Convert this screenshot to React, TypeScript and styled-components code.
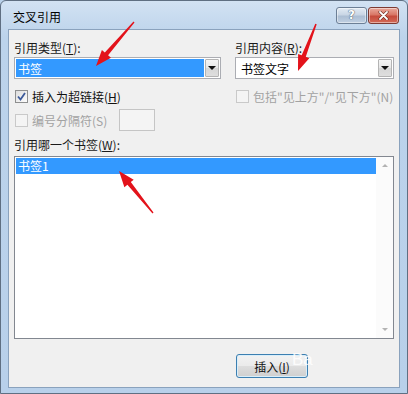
import React from 'react';
import styled, { createGlobalStyle } from 'styled-components';

const Global = createGlobalStyle`
  html, body { margin: 0; padding: 0; background: #b9d1ea; }
  body {
    font-family: "Noto Sans CJK SC", "Microsoft YaHei", sans-serif;
    font-size: 12px;
    color: #1a1a1a;
  }
  * { box-sizing: border-box; }
`;

const Window = styled.div`
  position: relative;
  width: 408px;
  height: 394px;
  border: 1px solid #5f6f82;
  border-radius: 6px 6px 0 0;
  background: linear-gradient(#d2e2f3, #bcd3eb 36px, #b8d0ea);
  display: flex;
  flex-direction: column;
  padding: 0 7px 5px 7px;
  overflow: hidden;
`;

const TitleBar = styled.div`
  height: 28px;
  display: flex;
  align-items: center;
  padding: 3px 1px 0 5px;
`;

const Title = styled.div`
  font-size: 12px;
  color: #000;
  flex: 1;
`;

const CaptionButton = styled.div<{ $close?: boolean }>`
  width: 31px;
  height: 17px;
  margin-top: -3px;
  border: 1px solid ${(p) => (p.$close ? '#7d3a32' : '#6c7f96')};
  border-radius: 3px;
  background: ${(p) =>
    p.$close
      ? 'linear-gradient(#e9a99c 0%, #d97766 45%, #c64b3c 55%, #d36a57 100%)'
      : 'linear-gradient(#e3ebf4 0%, #c9d6e5 45%, #adbfd4 55%, #c0d0e2 100%)'};
  box-shadow: inset 0 0 0 1px rgba(255, 255, 255, 0.45);
  display: flex;
  align-items: center;
  justify-content: center;
  & + & { margin-left: 1px; }
`;

const HelpGlyph = styled.span`
  font-family: "DejaVu Sans", sans-serif;
  font-weight: bold;
  font-size: 12px;
  color: #fff;
  text-shadow: 0 0 1px #3e4f63, 0 0 1px #3e4f63;
  line-height: 1;
`;

const Client = styled.div`
  flex: 1;
  background: #f0f0f0;
  border: 1px solid #8aa2bd;
  padding: 10px 5px 0 5px;
  display: flex;
  flex-direction: column;
`;

const TopGrid = styled.div`
  display: grid;
  grid-template-columns: 207px 159px;
  column-gap: 14px;
  align-items: center;
`;

const Label = styled.div<{ $gap?: number }>`
  height: 16px;
  line-height: 16px;
  margin-bottom: 1px;
  margin-top: ${(p) => p.$gap ?? 0}px;
  white-space: nowrap;
`;

const U = styled.span`
  text-decoration: underline;
  text-underline-offset: 1px;
`;

const Combo = styled.div`
  height: 22px;
  border: 1px solid #abadb3;
  background: #fff;
  padding: 1px;
  display: flex;
`;

const ComboValue = styled.div<{ $selected?: boolean }>`
  flex: 1;
  display: flex;
  align-items: center;
  padding-left: ${(p) => (p.$selected ? 2 : 4)}px;
  margin-right: 1px;
  background: ${(p) => (p.$selected ? '#3399ff' : 'transparent')};
  color: ${(p) => (p.$selected ? '#fff' : '#000')};
`;

const DropButton = styled.div`
  width: 14px;
  border: 1px solid #b4b4b4;
  border-radius: 1px;
  background: linear-gradient(#f5f5f5, #e7e7e7 50%, #d6d6d6 51%, #dedede);
  display: flex;
  align-items: center;
  justify-content: center;
`;

const Triangle = styled.span`
  width: 0;
  height: 0;
  border-left: 4px solid transparent;
  border-right: 4px solid transparent;
  border-top: 4px solid #111;
`;

const CheckRow = styled.div<{ $gap: number; $disabled?: boolean }>`
  margin-top: ${(p) => p.$gap}px;
  height: 16px;
  display: flex;
  align-items: center;
  gap: 4px;
  padding-left: 1px;
  color: ${(p) => (p.$disabled ? '#a2a2a2' : '#111')};
  white-space: nowrap;
`;

const Box = styled.span<{ $disabled?: boolean }>`
  width: 13px;
  height: 13px;
  flex: none;
  border: 1px solid ${(p) => (p.$disabled ? '#c9c9c9' : '#8e8f8f')};
  background: ${(p) =>
    p.$disabled ? '#f4f4f4' : 'linear-gradient(135deg, #dcdcdc, #fdfdfd)'};
  display: flex;
  align-items: center;
  justify-content: center;
`;

const SeparatorRow = styled.div`
  margin-top: 5px;
  height: 22px;
  display: flex;
  align-items: center;
  gap: 4px;
  padding-left: 1px;
  color: #a2a2a2;
`;

const SmallInput = styled.div`
  width: 36px;
  height: 22px;
  margin-left: 8px;
  border: 1px solid #c5c5c5;
  background: #f4f4f4;
`;

const ListBox = styled.div`
  margin-top: 2px;
  height: 183px;
  border: 1px solid #828790;
  background: #fff;
  display: flex;
`;

const ListItems = styled.div`
  flex: 1;
  padding: 1px 0 0 1px;
`;

const ListItem = styled.div<{ $selected?: boolean }>`
  height: 16px;
  line-height: 16px;
  padding-left: 2px;
  background: ${(p) => (p.$selected ? '#3399ff' : 'transparent')};
  color: ${(p) => (p.$selected ? '#fff' : '#000')};
`;

const ScrollBar = styled.div`
  width: 17px;
  background: #fbfbfb;
  display: flex;
  flex-direction: column;
  justify-content: space-between;
`;

const ScrollArrow = styled.div<{ $down?: boolean }>`
  height: 17px;
  display: flex;
  align-items: center;
  justify-content: center;
  &::after {
    content: '';
    border-left: 3px solid transparent;
    border-right: 3px solid transparent;
    ${(p) =>
      p.$down ? 'border-top: 3px solid #b3b3b3;' : 'border-bottom: 3px solid #b3b3b3;'}
  }
`;

const Footer = styled.div`
  margin-top: 15px;
  display: flex;
  padding-left: 222px;
`;

const PushButton = styled.div`
  width: 72px;
  height: 24px;
  border: 1px solid #3c7fb1;
  border-radius: 3px;
  background: linear-gradient(#f2f2f2 0%, #ebebeb 48%, #dddddd 52%, #cfcfcf 100%);
  box-shadow: inset 0 0 0 1px #d9eefa;
  display: flex;
  align-items: center;
  justify-content: center;
  color: #111;
`;

const Overlay = styled.svg`
  position: absolute;
  left: -1px;
  top: -1px;
  width: 408px;
  height: 394px;
  pointer-events: none;
`;

const Watermark = styled.span`
  position: absolute;
  left: 291px;
  top: 349px;
  font-family: "Liberation Sans", Arial, sans-serif;
  font-size: 17px;
  color: rgba(255, 255, 255, 0.85);
  pointer-events: none;
`;

type Pt = [number, number];

function arrowPoints(tail: Pt, tip: Pt): string {
  const dx = tip[0] - tail[0];
  const dy = tip[1] - tail[1];
  const len = Math.hypot(dx, dy);
  const ux = dx / len;
  const uy = dy / len;
  const px = -uy;
  const py = ux;
  const headLen = 16;
  const bx = tip[0] - ux * headLen;
  const by = tip[1] - uy * headLen;
  const pts: Pt[] = [
    [tail[0] + px * 0.7, tail[1] + py * 0.7],
    [bx + px * 2.2, by + py * 2.2],
    [bx + px * 6, by + py * 6],
    tip,
    [bx - px * 6, by - py * 6],
    [bx - px * 2.2, by - py * 2.2],
    [tail[0] - px * 0.7, tail[1] - py * 0.7],
  ];
  return pts.map((p) => `${p[0].toFixed(1)},${p[1].toFixed(1)}`).join(' ');
}

const arrows: [Pt, Pt][] = [
  [[134, 22], [96, 66]],
  [[316, 24], [298, 71]],
  [[153, 213], [119, 171]],
];

const Check = () => (
  <svg width="9" height="9" viewBox="0 0 9 9">
    <path d="M1 4.5 L3.5 7.5 L8 1" fill="none" stroke="#3c5a9a" strokeWidth="1.8" />
  </svg>
);

export default function App() {
  return (
    <>
      <Global />
      <Window>
        <TitleBar>
          <Title>交叉引用</Title>
          <CaptionButton>
            <HelpGlyph>?</HelpGlyph>
          </CaptionButton>
          <CaptionButton $close>
            <svg width="11" height="9" viewBox="0 0 11 9">
              <path d="M2 1 L9 8 M9 1 L2 8" stroke="#5a1f18" strokeWidth="3" strokeLinecap="round" />
              <path d="M2 1 L9 8 M9 1 L2 8" stroke="#fff" strokeWidth="1.8" strokeLinecap="round" />
            </svg>
          </CaptionButton>
        </TitleBar>
        <Client>
          <TopGrid>
            <Label>
              引用类型(<U>T</U>):
            </Label>
            <Label>
              引用内容(<U>R</U>):
            </Label>
            <Combo>
              <ComboValue $selected>书签</ComboValue>
              <DropButton>
                <Triangle />
              </DropButton>
            </Combo>
            <Combo>
              <ComboValue>书签文字</ComboValue>
              <DropButton>
                <Triangle />
              </DropButton>
            </Combo>
            <CheckRow $gap={9}>
              <Box>
                <Check />
              </Box>
              <span>
                插入为超链接(<U>H</U>)
              </span>
            </CheckRow>
            <CheckRow $gap={9} $disabled>
              <Box $disabled />
              <span>包括"见上方"/"见下方"(N)</span>
            </CheckRow>
            <SeparatorRow>
              <Box $disabled />
              <span>编号分隔符(S)</span>
              <SmallInput />
            </SeparatorRow>
          </TopGrid>
          <Label $gap={6}>
            引用哪一个书签(<U>W</U>):
          </Label>
          <ListBox>
            <ListItems>
              <ListItem $selected>书签1</ListItem>
            </ListItems>
            <ScrollBar>
              <ScrollArrow />
              <ScrollArrow $down />
            </ScrollBar>
          </ListBox>
          <Footer>
            <PushButton>
              插入(<U>I</U>)
            </PushButton>
          </Footer>
        </Client>
        <Watermark>Ba</Watermark>
        <Overlay viewBox="0 0 408 394">
          {arrows.map(([tail, tip], i) => (
            <polygon key={i} points={arrowPoints(tail, tip)} fill="#e3131b" />
          ))}
        </Overlay>
      </Window>
    </>
  );
}
